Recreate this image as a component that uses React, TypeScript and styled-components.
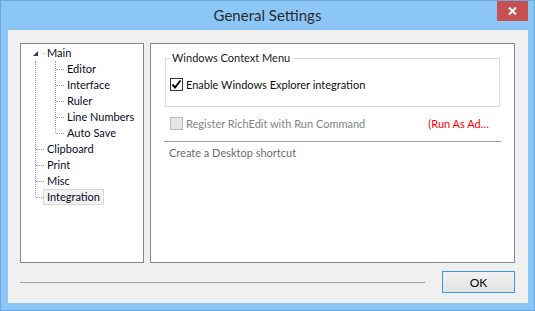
import React from 'react';
import styled, { createGlobalStyle } from 'styled-components';

const GlobalStyle = createGlobalStyle`
  html, body {
    margin: 0;
    padding: 0;
    background: #ffffff;
  }
  body {
    font-family: Lato, 'Liberation Sans', sans-serif;
    font-size: 11px;
    color: #000000;
  }
`;

const Frame = styled.div`
  box-sizing: border-box;
  width: 535px;
  height: 311px;
  display: flex;
  flex-direction: column;
  background: #8cc6f7;
  border: 1px solid #6aa9e2;
`;

const TitleBar = styled.div`
  height: 29px;
  display: grid;
  grid-template-columns: 1fr auto 1fr;
  align-items: start;
`;

const Title = styled.div`
  grid-column: 2;
  padding-top: 5px;
  font-size: 15px;
  color: #2b2b2b;
  line-height: 18px;
`;

const CloseButton = styled.button`
  grid-column: 3;
  justify-self: end;
  width: 31px;
  height: 20px;
  margin: 0 6px 0 0;
  padding: 0;
  border: none;
  background: #c75050;
  display: flex;
  align-items: center;
  justify-content: center;
`;

const Client = styled.div`
  flex: 1;
  margin: 0 6px 7px 7px;
  background: #f0f0f0;
  padding: 13px 13px 0 12px;
  display: flex;
  flex-direction: column;
`;

const Panels = styled.div`
  display: flex;
  gap: 6px;
  height: 220px;
`;

const Panel = styled.div<{ $width?: number }>`
  box-sizing: border-box;
  ${(p) => (p.$width ? `width: ${p.$width}px;` : 'flex: 1;')}
  background: #ffffff;
  border: 1px solid #828790;
`;

const Tree = styled.div`
  padding-top: 1px;
`;

const Group = styled.div<{ $level: number }>`
  position: relative;
  &::before {
    content: '';
    position: absolute;
    left: ${(p) => 14 + p.$level * 20}px;
    top: 0;
    bottom: 8px;
    border-left: 1px dotted #a0a0a0;
  }
`;

const Row = styled.div<{ $level: number; $expander?: boolean }>`
  position: relative;
  height: 16px;
  display: flex;
  align-items: center;
  padding-left: ${(p) => (p.$expander ? 12 : 26 + p.$level * 20)}px;
  &::before {
    content: '';
    position: absolute;
    top: 8px;
    left: ${(p) => (p.$expander ? 22 : 15 + p.$level * 20)}px;
    width: ${(p) => (p.$expander ? 1 : 8)}px;
    border-top: 1px dotted #a0a0a0;
  }
`;

const Expander = styled.svg`
  width: 5px;
  height: 5px;
  margin-right: 9px;
`;

const Label = styled.span<{ $selected?: boolean }>`
  box-sizing: border-box;
  height: 16px;
  line-height: 14px;
  margin-left: -4px;
  padding: 0 3px;
  border: 1px solid ${(p) => (p.$selected ? '#d9d9d9' : 'transparent')};
  background: ${(p) => (p.$selected ? '#f2f2f2' : 'transparent')};
  color: #0a0a1e;
  white-space: nowrap;
`;

const Content = styled.div`
  display: flex;
  flex-direction: column;
`;

const GroupBox = styled.fieldset`
  margin: 6px 14px 0 14px;
  padding: 10px 4px 14px 4px;
  border: 1px solid #dcdcdc;
  min-width: 0;
`;

const Legend = styled.legend`
  padding: 0 2px;
  margin-left: 0;
  line-height: 16px;
  color: #1a1a1a;
`;

const CheckRow = styled.div<{ $indent?: number; $gapTop?: number }>`
  height: 16px;
  display: flex;
  align-items: center;
  gap: 3px;
  padding-left: ${(p) => p.$indent ?? 0}px;
  margin-top: ${(p) => p.$gapTop ?? 0}px;
`;

const Box = styled.span<{ $disabled?: boolean }>`
  box-sizing: border-box;
  width: 13px;
  height: 13px;
  border: 1px solid ${(p) => (p.$disabled ? '#bcbcbc' : '#333333')};
  background: ${(p) => (p.$disabled ? '#e6e6e6' : '#ffffff')};
  display: flex;
  align-items: center;
  justify-content: center;
`;

const CheckText = styled.span<{ $disabled?: boolean }>`
  color: ${(p) => (p.$disabled ? '#838383' : '#111111')};
  white-space: nowrap;
`;

const Warning = styled.span`
  margin-left: auto;
  margin-right: 25px;
  color: #ff0000;
  white-space: nowrap;
`;

const Divider = styled.div`
  margin: 10px 13px 0 13px;
  height: 1px;
  background: #a0a0a0;
`;

const Note = styled.div`
  margin-top: 3px;
  height: 16px;
  line-height: 16px;
  padding-left: 18px;
  color: #6d6d6d;
`;

const Footer = styled.div`
  margin-top: 8px;
  display: flex;
  align-items: center;
`;

const FooterLine = styled.div`
  flex: 1;
  height: 1px;
  margin-right: 17px;
  background: #a0a0a0;
`;

const OkButton = styled.button`
  box-sizing: border-box;
  width: 73px;
  height: 22px;
  margin: 0;
  padding: 0;
  border: 1px solid #3399ff;
  background: linear-gradient(#f2f2f2, #e3e3e3);
  font-family: Lato, 'Liberation Sans', sans-serif;
  font-size: 12px;
  color: #000000;
`;

const children = ['Editor', 'Interface', 'Ruler', 'Line Numbers', 'Auto Save'];
const topLevel = ['Clipboard', 'Print', 'Misc', 'Integration'];

const Check = () => (
  <svg width="11" height="11" viewBox="0 0 11 11">
    <path d="M1.5 5.5 L4 8.5 L9.5 1.5" fill="none" stroke="#000" strokeWidth="2" />
  </svg>
);

const App: React.FC = () => (
  <>
    <GlobalStyle />
    <Frame>
      <TitleBar>
        <Title>General Settings</Title>
        <CloseButton aria-label="Close">
          <svg width="9" height="8" viewBox="0 0 9 8">
            <path d="M1 0.5 L8 7.5 M8 0.5 L1 7.5" stroke="#fff" strokeWidth="2" />
          </svg>
        </CloseButton>
      </TitleBar>
      <Client>
        <Panels>
          <Panel $width={124}>
            <Tree>
              <Row $level={0} $expander>
                <Expander viewBox="0 0 5 5">
                  <polygon points="5,0 5,5 0,5" fill="#3a3a3a" />
                </Expander>
                <Label>Main</Label>
              </Row>
              <Group $level={0}>
                <Group $level={1}>
                  {children.map((c) => (
                    <Row key={c} $level={1}>
                      <Label>{c}</Label>
                    </Row>
                  ))}
                </Group>
                {topLevel.map((t) => (
                  <Row key={t} $level={0}>
                    <Label $selected={t === 'Integration'}>{t}</Label>
                  </Row>
                ))}
              </Group>
            </Tree>
          </Panel>
          <Panel>
            <Content>
              <GroupBox>
                <Legend>Windows Context Menu</Legend>
                <CheckRow>
                  <Box>
                    <Check />
                  </Box>
                  <CheckText>Enable Windows Explorer integration</CheckText>
                </CheckRow>
              </GroupBox>
              <CheckRow $indent={19} $gapTop={8}>
                <Box $disabled />
                <CheckText $disabled>Register RichEdit with Run Command</CheckText>
                <Warning>(Run As Ad…</Warning>
              </CheckRow>
              <Divider />
              <Note>Create a Desktop shortcut</Note>
            </Content>
          </Panel>
        </Panels>
        <Footer>
          <FooterLine />
          <OkButton>OK</OkButton>
        </Footer>
      </Client>
    </Frame>
  </>
);

export default App;
